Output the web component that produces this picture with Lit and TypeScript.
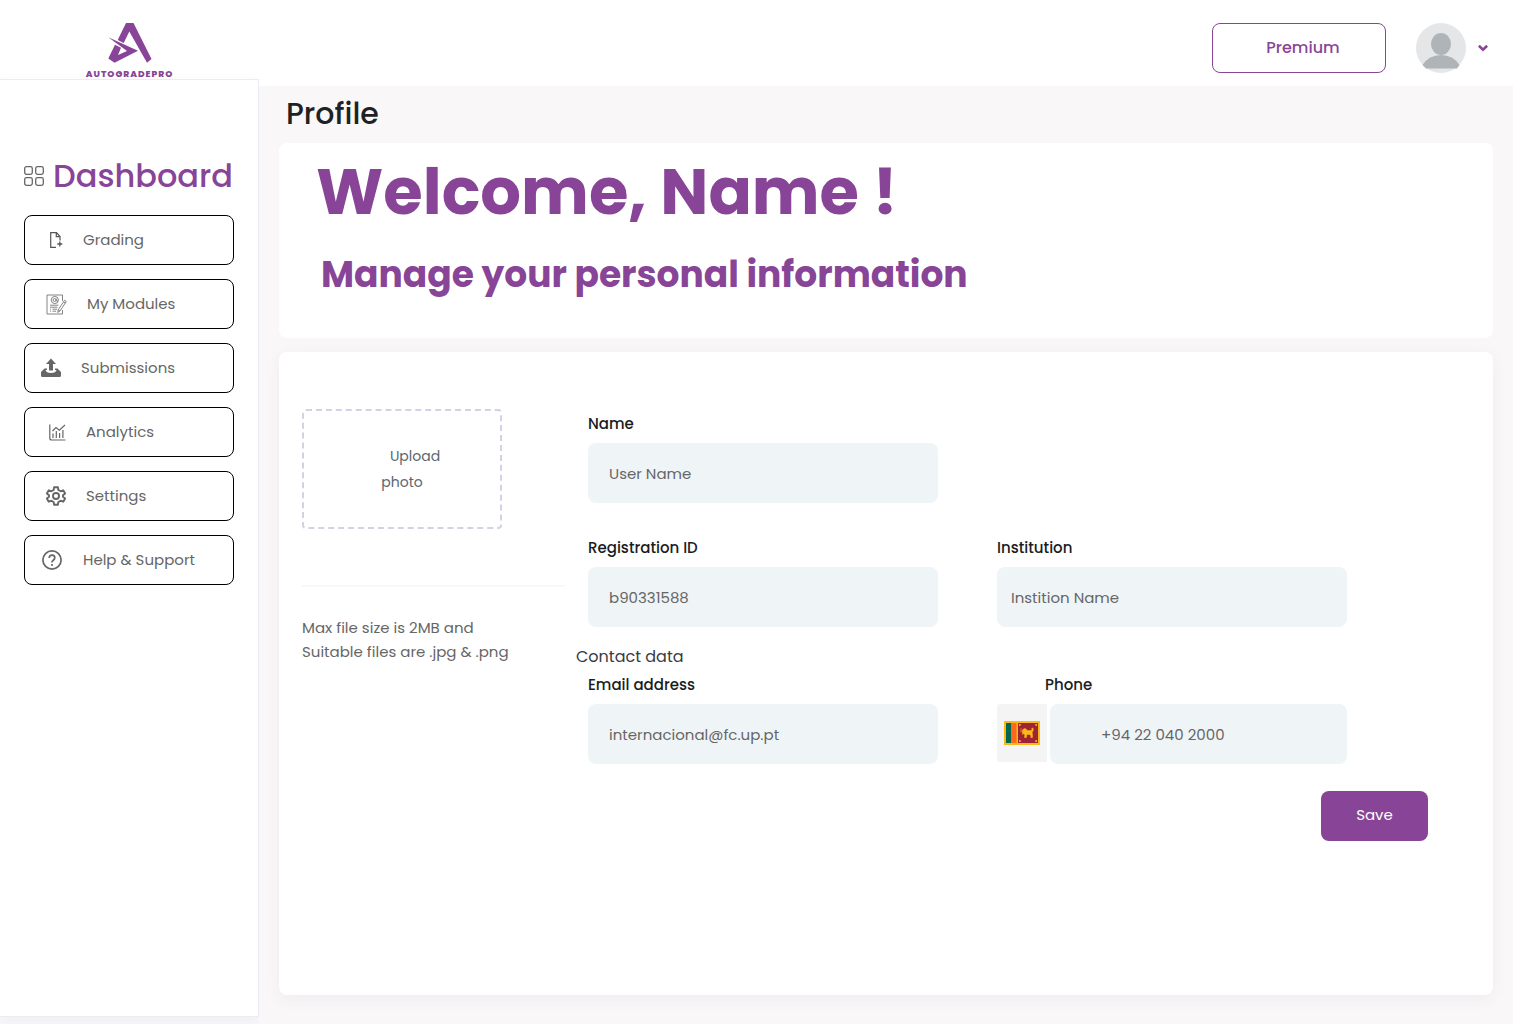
import { LitElement, html, css, svg } from "lit";
import { customElement } from "lit/decorators.js";

const logoMark = html`<svg class="mark" viewBox="0 0 46 42" width="46" height="42" aria-hidden="true">
  <path d="M19 1h7.500L44.500 37 40 40.800 22.300 9.500 16.700 21 10.700 18z" fill="#884597"/>
  <path d="M1.300 15.300L31 28.700 7.500 40.800 1.300 36.500 8 22.800 14 25.800 11 33 20 29z" fill="#884597"/>
</svg>`;

const gridIcon = html`<svg viewBox="0 0 20 20" width="20" height="20" fill="none" stroke="#666" stroke-width="1.300" aria-hidden="true">
  <rect x=".7" y=".7" width="7.600" height="7.600" rx="1.800"/><rect x="11.700" y=".7" width="7.600" height="7.600" rx="1.800"/>
  <rect x=".7" y="11.700" width="7.600" height="7.600" rx="1.800"/><rect x="11.700" y="11.700" width="7.600" height="7.600" rx="1.800"/>
</svg>`;

interface NavItem {
  label: string;
  indent: string;
  width: number;
  height: number;
  box: string;
  art: unknown;
}

const navItems: NavItem[] = [
  {
    label: "Grading", indent: "far", width: 14, height: 16, box: "0 0 14 16",
    art: svg`<path d="M7 15.300H1.700V.7H7.500l3.500 3.800v4M7.300.7v4H11" fill="none" stroke="#555" stroke-width="1.200"/>
      <path d="M10.800 9.500v5M8.300 12h5" fill="none" stroke="#555" stroke-width="1.300"/>`,
  },
  {
    label: "My Modules", indent: "mid", width: 21, height: 21, box: "0 0 21 21",
    art: svg`<g fill="none" stroke="#777" stroke-width=".9">
      <path d="M16.500 7V1H1v19h15.500v-4"/>
      <circle cx="8.800" cy="6" r="3.600"/><circle cx="8.600" cy="6" r="1.500"/><path d="M10.200 4.500v2.200q.8 1 1.900.1"/>
      <path d="M4 11.200h8.500M4 13.200h7.500M4 15.200h1M6.500 15.200h4.500M4 17.200h1M6.500 17.200h3.500"/>
      <path d="M18.600 6.300l1.700 1.200-6.300 9.500-2.300 1.400.5-2.600zM17.500 8l1.700 1.200M12.300 15.800l1.700 1.200"/></g>`,
  },
  {
    label: "Submissions", indent: "near", width: 20, height: 20, box: "0 0 20 20",
    art: svg`<path d="M10 .5l5 5.500h-3v6.500H8V6H5z" fill="#666"/>
      <path d="M6 10.500v1.500H4.500Q5 15 10 15t5.500-3H14v-1.500h2.500L20 14v3.500q0 1.500-1.500 1.500h-17Q0 19 0 17.500V14l3.500-3.500z" fill="#666"/>`,
  },
  {
    label: "Analytics", indent: "far", width: 17, height: 17, box: "0 0 17 17",
    art: svg`<g fill="none" stroke="#666" stroke-width="1.200"><path d="M.8.500V14q0 2 2 2H16.500"/>
      <path d="M4 14V9.500M7.300 14V7M10.600 14V9M13.900 14V6"/>
      <path d="M3.500 7L7 3.500l3.300 2.800L16 1"/></g>`,
  },
  {
    label: "Settings", indent: "mid", width: 20, height: 20, box: "1.500 1.500 21 21",
    art: svg`<path d="M10 2.800h4l.5 2.900 2.300 1.300 2.800-1 2 3.400-2.300 1.900v1.400l2.300 1.900-2 3.400-2.800-1-2.300 1.300-.5 2.900h-4l-.5-2.900L7.200 17l-2.800 1-2-3.400 2.300-1.900v-1.400L2.400 9.400l2-3.400 2.800 1 2.300-1.300z" fill="none" stroke="#666" stroke-width="2" stroke-linejoin="round"/>
      <circle cx="12" cy="12" r="3.200" fill="none" stroke="#666" stroke-width="2"/>`,
  },
  {
    label: "Help & Support", indent: "near", width: 22, height: 20, box: "0 0 22 20",
    art: svg`<circle cx="11" cy="10" r="9.100" fill="none" stroke="#666" stroke-width="1.700"/>
      <path d="M8.200 8q0-2.800 2.800-2.800t2.800 2.600q0 1.300-1.500 2.400T11 12.500" fill="none" stroke="#666" stroke-width="1.700"/>
      <circle cx="11" cy="15" r="1.100" fill="#666"/>`,
  },
];

const avatar = html`<svg viewBox="0 0 50 50" width="50" height="50" aria-hidden="true">
  <circle cx="25" cy="25" r="25" fill="#e4e6e8"/>
  <ellipse cx="25" cy="21" rx="10" ry="11" fill="#aeb4b8"/>
  <path d="M6.500 42Q13 32 25 32t18.500 10L41 45.500H10z" fill="#aeb4b8"/>
</svg>`;

const chevron = html`<svg viewBox="0 0 10 8" width="10" height="8" aria-hidden="true">
  <path d="M.8 1.800L5 5.800l4.200-4" fill="none" stroke="#884597" stroke-width="2.600"/>
</svg>`;

const flag = html`<svg viewBox="0 0 36 24" width="36" height="24" aria-hidden="true">
  <rect width="36" height="24" fill="#fbb917"/>
  <rect x="2" y="2" width="5" height="20" fill="#00664f"/>
  <rect x="7" y="2" width="5.500" height="20" fill="#ff6a1a"/>
  <rect x="14" y="2" width="20" height="20" fill="#a02235"/>
  <path d="M15 3h2l-.5 2H15zM33 3h-2l.5 2H33zM15 21h2l-.5-2H15zM33 21h-2l.5-2H33z" fill="#e8a21c"/>
  <path d="M17 7v4.500M16.300 10h2M18.500 9l1.500-1.500 2.200.5.800 1.500h4l1-.5-.3-1.800 1.300-.2.300 2.700-1.200 1.300.4 2.500v3h-1.800l.3-1.800-1.500-1.200h-2l-1 1v2h-2l.3-3-1.300-.8-1 .8z" fill="#fbb917" stroke="#fbb917" stroke-width=".5"/>
</svg>`;

@customElement("app-root")
export class AppRoot extends LitElement {
  static styles = css`
    :host {
      display: block;
      font-family: Poppins, Inter, "Open Sans", sans-serif;
      font-size: 15px;
      line-height: 24px;
      color: #666;
      background: #fff;
    }
    *, *::before, *::after { box-sizing: border-box; }
    h1, h2, h3, p { margin: 0; }
    button, input { font: inherit; color: inherit; }
    button { cursor: pointer; }
    svg { display: block; flex: none; }

    .page {
      display: grid;
      grid-template-columns: 259px minmax(0, 1fr);
      min-height: 100vh;
      padding-right: 3px;
    }
    .side {
      display: flex;
      flex-direction: column;
      background: #f9f7f8;
      padding-bottom: 7px;
    }
    .brand {
      display: flex;
      flex-direction: column;
      align-items: center;
      gap: 4px;
      height: 79px;
      padding-top: 22px;
      background: #fff;
      text-decoration: none;
    }
    .brand-name {
      font-size: 9px;
      font-weight: 800;
      line-height: 12px;
      letter-spacing: 1px;
      color: #884597;
    }
    .nav {
      flex: 1;
      padding: 72px 24px 24px;
      background: #fff;
      border: 1px solid #ebebf3;
      border-left: 0;
      box-shadow: 0 4px 12px rgba(80, 80, 140, 0.06);
    }
    .dash {
      display: flex;
      align-items: center;
      gap: 9px;
      height: 48px;
      font-size: 32px;
      font-weight: 500;
      color: #884597;
      text-decoration: none;
    }
    .menu {
      display: grid;
      gap: 14px;
      margin: 15px 0 0;
      padding: 0;
      list-style: none;
    }
    .item {
      display: flex;
      align-items: center;
      gap: 20px;
      height: 50px;
      border: 1px solid #000;
      border-radius: 8px;
      color: #666;
      text-decoration: none;
    }
    .near { padding-left: 16px; }
    .mid { padding-left: 21px; }
    .far { padding-left: 24px; }

    .content {
      display: flex;
      flex-direction: column;
      background: #f9f7f8;
    }
    .top {
      display: flex;
      justify-content: flex-end;
      align-items: center;
      gap: 30px;
      height: 86px;
      padding: 10px 25px 0 0;
      background: #fff;
    }
    .premium {
      width: 174px;
      height: 50px;
      padding: 0 0 0 8px;
      border: 1px solid #884597;
      border-radius: 8px;
      background: #fff;
      font-size: 16px;
      font-weight: 500;
      color: #884597;
    }
    .account {
      display: flex;
      align-items: center;
      gap: 12px;
      padding: 0;
      border: 0;
      background: none;
    }
    .main {
      flex: 1;
      display: flex;
      flex-direction: column;
      padding: 0 20px 29px;
    }
    .title {
      padding: 0 0 2px 7px;
      font-size: 30px;
      font-weight: 500;
      line-height: 55px;
      color: #1f2225;
    }
    .welcome {
      padding: 1px 37px 36px;
      border-radius: 8px;
      background: #fff;
      font-weight: 700;
      color: #884597;
    }
    .hello {
      font-size: 64px;
      line-height: 96px;
    }
    .lead {
      margin-top: 8px;
      padding-left: 5px;
      font-size: 36px;
      line-height: 54px;
    }
    .card {
      flex: 1;
      display: grid;
      grid-template-columns: 263px minmax(0, 1fr);
      column-gap: 11px;
      margin-top: 14px;
      padding: 57px 65px 57px 23px;
      border-radius: 8px;
      background: #fff;
      box-shadow: 0 4px 16px rgba(60, 60, 90, 0.06);
    }
    .upload {
      display: flex;
      flex-direction: column;
      justify-content: center;
      align-items: center;
      width: 200px;
      height: 120px;
      border: 2px dashed #d0d3e5;
      border-radius: 4px;
      font-size: 14px;
      line-height: 26px;
      color: #5b6770;
      cursor: pointer;
    }
    .upload-first { padding-left: 26px; }
    .rule {
      height: 2px;
      margin: 56px 0 29px;
      border: 0;
      background: #f8f8f9;
    }
    .form {
      display: flex;
      flex-direction: column;
      padding-top: 3px;
    }
    .fields {
      display: grid;
      grid-template-columns: repeat(2, minmax(0, 350px));
      gap: 33px 59px;
      padding-left: 12px;
    }
    .first { grid-column: 1; }
    .field {
      display: flex;
      flex-direction: column;
      gap: 7px;
    }
    .label {
      font-weight: 500;
      color: #1a1c1f;
    }
    .input {
      width: 100%;
      height: 60px;
      min-width: 0;
      padding: 0 21px;
      border: 0;
      border-radius: 8px;
      background: #eff4f7;
    }
    .snug { padding-left: 14px; }
    .section {
      margin: 18px 0 4px;
      font-size: 16px;
      font-weight: 400;
      color: #3a3c3f;
    }
    .phone-label { padding-left: 48px; }
    .phone {
      display: flex;
      gap: 3px;
    }
    .country {
      display: flex;
      flex: none;
      justify-content: center;
      align-items: center;
      width: 50px;
      height: 58px;
      padding: 0;
      border: 0;
      border-radius: 3px 0 0 3px;
      background: #f4f4f4;
    }
    .number { padding-left: 51px; }
    .save {
      align-self: flex-end;
      width: 107px;
      height: 50px;
      margin-top: 27px;
      padding: 0 0 2px;
      border: 0;
      border-radius: 8px;
      background: #884597;
      color: #fff;
    }
  `;

  render() {
    return html`
      <div class="page">
        <div class="side">
          <a class="brand" href="#home">
            ${logoMark}
            <span class="brand-name">AUTOGRADEPRO</span>
          </a>
          <nav class="nav">
            <a class="dash" href="#dashboard">${gridIcon}<span>Dashboard</span></a>
            <ul class="menu">
              ${navItems.map((item) => html`<li>
                <a class="item ${item.indent}" href="#">
                  <svg viewBox=${item.box} width=${item.width} height=${item.height} aria-hidden="true">${item.art}</svg>
                  <span>${item.label}</span>
                </a>
              </li>`)}
            </ul>
          </nav>
        </div>
        <div class="content">
          <header class="top">
            <button class="premium" type="button">Premium</button>
            <button class="account" type="button" aria-label="Account">${avatar}${chevron}</button>
          </header>
          <main class="main">
            <h1 class="title">Profile</h1>
            <section class="welcome">
              <h2 class="hello">Welcome, Name !</h2>
              <p class="lead">Manage your personal information</p>
            </section>
            <section class="card">
              <div>
                <label class="upload" for="photo">
                  <span class="upload-first">Upload</span>
                  <span>photo</span>
                </label>
                <input id="photo" type="file" accept=".jpg,.png" hidden />
                <hr class="rule" />
                <p>Max file size is 2MB and<br />Suitable files are .jpg &amp; .png</p>
              </div>
              <form class="form">
                <div class="fields">
                  <div class="field first">
                    <label class="label" for="name">Name</label>
                    <input class="input" id="name" type="text" value="User Name" />
                  </div>
                  <div class="field first">
                    <label class="label" for="reg">Registration ID</label>
                    <input class="input" id="reg" type="text" value="b90331588" />
                  </div>
                  <div class="field">
                    <label class="label" for="inst">Institution</label>
                    <input class="input snug" id="inst" type="text" value="Instition Name" />
                  </div>
                </div>
                <h3 class="section">Contact data</h3>
                <div class="fields">
                  <div class="field">
                    <label class="label" for="email">Email address</label>
                    <input class="input" id="email" type="email" value="internacional@fc.up.pt" />
                  </div>
                  <div class="field">
                    <label class="label phone-label" for="phone">Phone</label>
                    <div class="phone">
                      <button class="country" type="button" aria-label="Country">${flag}</button>
                      <input class="input number" id="phone" type="tel" value="+94 22 040 2000" />
                    </div>
                  </div>
                </div>
                <button class="save" type="button">Save</button>
              </form>
            </section>
          </main>
        </div>
      </div>
    `;
  }
}
